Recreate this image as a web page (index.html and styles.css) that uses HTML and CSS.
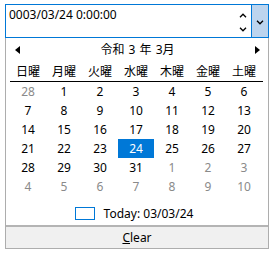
FILE: index.html
```html
<!DOCTYPE html>
<html>
<head>
<meta charset="utf-8">
<link rel="stylesheet" href="styles.css">
</head>
<body>
<div class="picker">
  <div class="field">
    <div class="value">0003/03/24 0:00:00</div>
    <div class="spin">
      <svg class="chev" width="8" height="5" viewBox="0 0 8 5"><path d="M1 4.2 L4 1.2 L7 4.2" fill="none" stroke="#000" stroke-width="1.3"/></svg>
      <svg class="chev" width="8" height="5" viewBox="0 0 8 5"><path d="M1 0.8 L4 3.8 L7 0.8" fill="none" stroke="#000" stroke-width="1.3"/></svg>
    </div>
    <div class="drop">
      <svg width="8" height="5" viewBox="0 0 8 5"><path d="M1 0.8 L4 3.8 L7 0.8" fill="none" stroke="#000" stroke-width="1.3"/></svg>
    </div>
  </div>
  <div class="panel">
    <div class="head">
      <svg width="5" height="8" viewBox="0 0 5 8"><path d="M5 0 L0 4 L5 8 Z" fill="#000"/></svg>
      <span class="title">令和 3 年 3月</span>
      <svg width="5" height="8" viewBox="0 0 5 8"><path d="M0 0 L5 4 L0 8 Z" fill="#000"/></svg>
    </div>
    <div class="grid names">
      <span>日曜</span><span>月曜</span><span>火曜</span><span>水曜</span><span>木曜</span><span>金曜</span><span>土曜</span>
    </div>
    <div class="grid days">
      <span class="o">28</span><span>1</span><span>2</span><span>3</span><span>4</span><span>5</span><span>6</span>
      <span>7</span><span>8</span><span>9</span><span>10</span><span>11</span><span>12</span><span>13</span>
      <span>14</span><span>15</span><span>16</span><span>17</span><span>18</span><span>19</span><span>20</span>
      <span>21</span><span>22</span><span>23</span><span class="sel">24</span><span>25</span><span>26</span><span>27</span>
      <span>28</span><span>29</span><span>30</span><span>31</span><span class="o">1</span><span class="o">2</span><span class="o">3</span>
      <span class="o">4</span><span class="o">5</span><span class="o">6</span><span class="o">7</span><span class="o">8</span><span class="o">9</span><span class="o">10</span>
    </div>
    <div class="today">
      <span class="box"></span>
      <span>Today: 03/03/24</span>
    </div>
    <div class="clear"><span class="u">C</span>lear</div>
  </div>
</div>
</body>
</html>
```
FILE: styles.css
```css
html, body {
  margin: 0;
  padding: 0;
  background: #fff;
}
body {
  font-family: "Noto Sans", "Noto Sans CJK JP", sans-serif;
  font-size: 12px;
  color: #000;
}
.picker {
  margin: 4px 0 0 5px;
  width: 264px;
}
.field {
  box-sizing: border-box;
  height: 34px;
  border: 1px solid #0078d7;
  display: flex;
}
.value {
  flex: 1;
  padding: 2px 0 0 3px;
  line-height: 16px;
}
.spin {
  width: 16px;
  display: flex;
  flex-direction: column;
  justify-content: space-between;
  align-items: center;
  padding: 8px 0 5px;
}
.chev { display: block; }
.drop {
  width: 16px;
  border-left: 1px solid #0078d7;
  background: #bcd4ee;
  display: flex;
  align-items: center;
  justify-content: center;
}
.drop svg { display: block; margin-top: 2px; }
.panel {
  box-sizing: border-box;
  width: 264px;
  height: 211px;
  border: 1px solid #adadad;
  border-top: none;
  display: flex;
  flex-direction: column;
}
.head {
  height: 18px;
  padding: 3px 8px 0 9px;
  display: flex;
  align-items: center;
  justify-content: space-between;
}
.head svg { display: block; }
.title { line-height: 18px; word-spacing: 1px; }
.grid {
  display: grid;
  grid-template-columns: repeat(7, 36px);
  margin: 0 5px 0 4px;
}
.grid span {
  text-align: center;
}
.names {
  margin-top: 3px;
  border-bottom: 1px solid #000;
}
.names span {
  height: 19px;
  line-height: 19px;
}
.days span {
  height: 19px;
  line-height: 19px;
}
.days .o { color: #8a8a8a; }
.days .sel {
  background: #0078d7;
  color: #fff;
}
.today {
  margin-top: 8px;
  height: 18px;
  display: flex;
  align-items: center;
  justify-content: center;
  gap: 9px;
  padding-right: 6px;
}
.box {
  box-sizing: border-box;
  width: 20px;
  height: 13px;
  border: 1px solid #0078d7;
}
.clear {
  margin-top: 3px;
  border-top: 2px solid #b4b4b4;
  background: #f0f0f0;
  flex: 1;
  display: flex;
  align-items: center;
  justify-content: center;
}
.u { text-decoration: underline; }
```
